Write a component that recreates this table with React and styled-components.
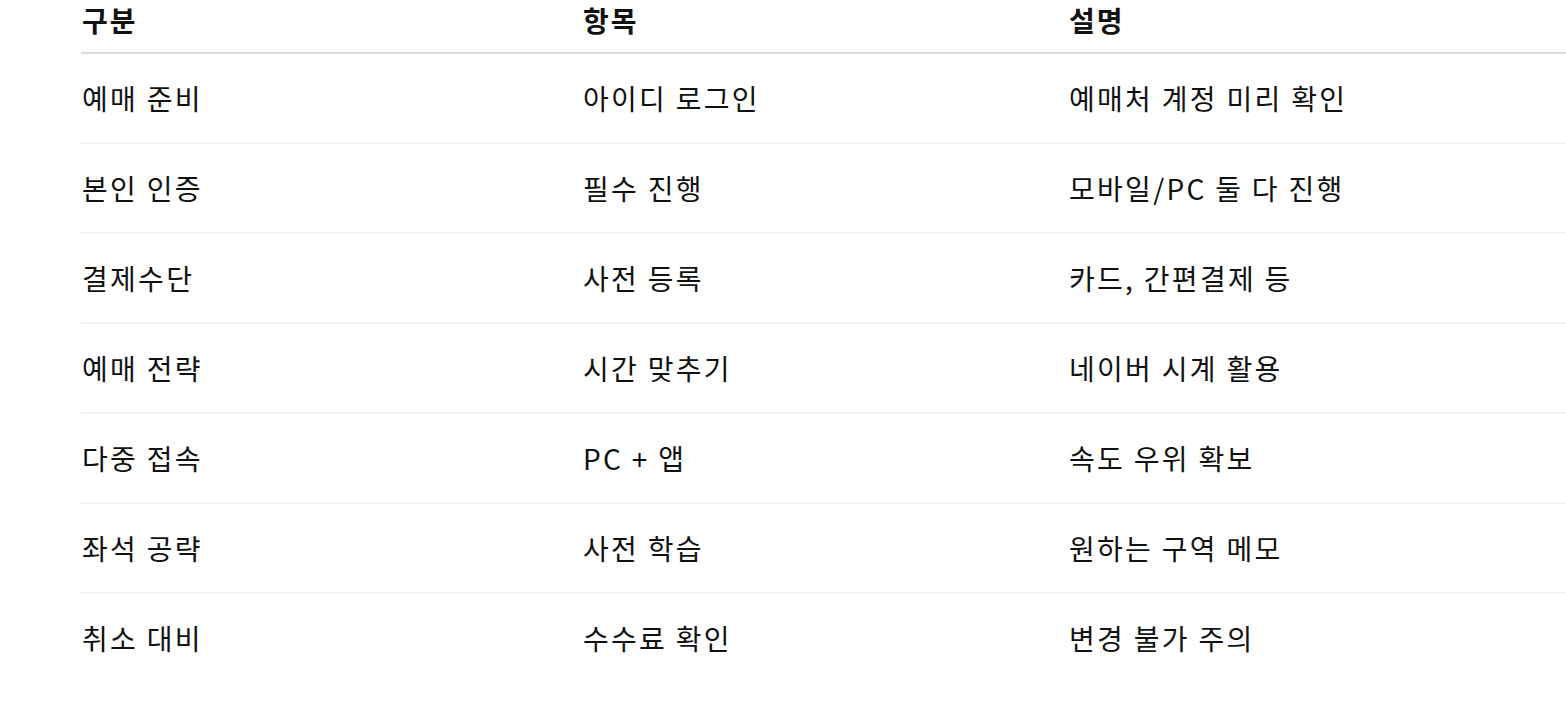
import React from "react";
import styled, { createGlobalStyle } from "styled-components";

const Global = createGlobalStyle`
  html, body { margin: 0; padding: 0; background: #fff; }
  body { font-family: "Noto Sans CJK KR", "Noto Sans", sans-serif; color: #111; overflow: hidden; }
`;

const Page = styled.div`
  padding: 0 0 0 81px;
  width: 1566px;
  box-sizing: border-box;
`;

const Table = styled.table`
  width: 100%;
  border-collapse: collapse;
  table-layout: fixed;
`;

const Col = styled.col`
  width: ${(p) => p.$w};
`;

const HeadCell = styled.th`
  text-align: left;
  font-weight: 700;
  font-size: 28px;
  letter-spacing: 2px;
  line-height: 40px;
  height: 42px;
  padding: 0 1px 10px;
  vertical-align: top;
  border-bottom: 2px solid #dcdcdc;
`;

const HeadRow = styled.tr``;

const Row = styled.tr`
  border-bottom: ${(p) => (p.$last ? "none" : "2px solid #f2f2f2")};
`;

const Cell = styled.td`
  font-size: 28px;
  letter-spacing: 2.3px;
  line-height: 40px;
  height: 88px;
  padding: 0 1px;
  vertical-align: middle;
  white-space: nowrap;
`;

const rows = [
  ["예매 준비", "아이디 로그인", "예매처 계정 미리 확인"],
  ["본인 인증", "필수 진행", "모바일/PC 둘 다 진행"],
  ["결제수단", "사전 등록", "카드, 간편결제 등"],
  ["예매 전략", "시간 맞추기", "네이버 시계 활용"],
  ["다중 접속", "PC + 앱", "속도 우위 확보"],
  ["좌석 공략", "사전 학습", "원하는 구역 메모"],
  ["취소 대비", "수수료 확인", "변경 불가 주의"],
];

export default function App() {
  return (
    <>
      <Global />
      <Page>
        <Table>
          <colgroup>
            <Col $w="501px" />
            <Col $w="486px" />
            <Col $w="auto" />
          </colgroup>
          <thead>
            <HeadRow>
              <HeadCell>구분</HeadCell>
              <HeadCell>항목</HeadCell>
              <HeadCell>설명</HeadCell>
            </HeadRow>
          </thead>
          <tbody>
            {rows.map((r, i) => (
              <Row key={i} $last={i === rows.length - 1}>
                {r.map((c, j) => (
                  <Cell key={j}>{c}</Cell>
                ))}
              </Row>
            ))}
          </tbody>
        </Table>
      </Page>
    </>
  );
}
